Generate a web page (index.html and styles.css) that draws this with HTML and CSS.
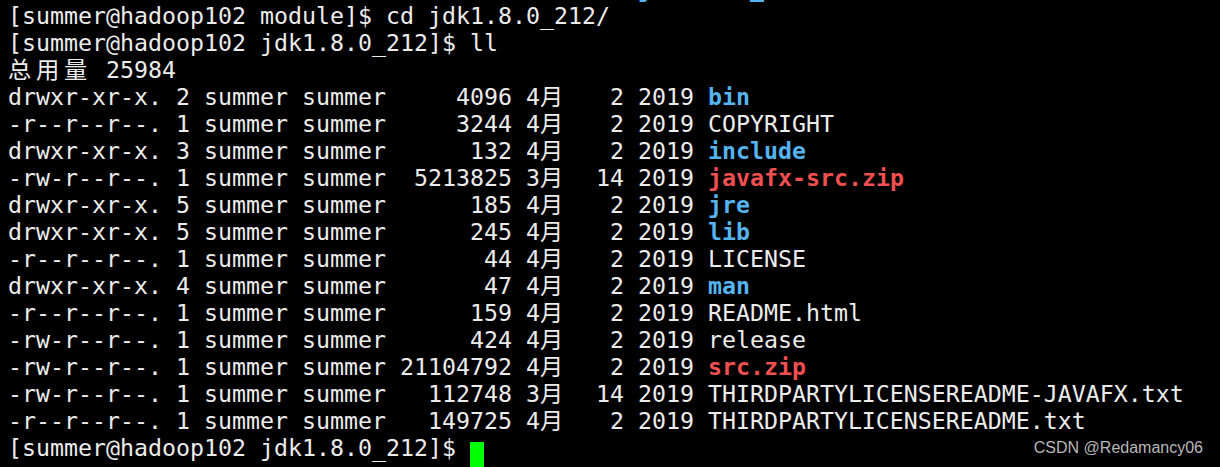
FILE: index.html
```html
<!DOCTYPE html>
<html lang="zh-CN">

<head>
    <meta charset="UTF-8">
    <meta name="viewport" content="width=device-width, initial-scale=1.0">
    <link rel="stylesheet" href="styles.css">
</head>

<body>
    <div id="screen">
<pre class="term">drwxr-xr-x. 7 summer summer 245 4<span class="wide">月</span>   2 2019 <b class="dir">jdk1.8.0_212</b>
[summer@hadoop102 module]$ cd jdk1.8.0_212/
[summer@hadoop102 jdk1.8.0_212]$ ll
<span class="wide">总用量</span> 25984
drwxr-xr-x. 2 summer summer     4096 4<span class="wide">月</span>   2 2019 <b class="dir">bin</b>
-r--r--r--. 1 summer summer     3244 4<span class="wide">月</span>   2 2019 COPYRIGHT
drwxr-xr-x. 3 summer summer      132 4<span class="wide">月</span>   2 2019 <b class="dir">include</b>
-rw-r--r--. 1 summer summer  5213825 3<span class="wide">月</span>  14 2019 <b class="zip">javafx-src.zip</b>
drwxr-xr-x. 5 summer summer      185 4<span class="wide">月</span>   2 2019 <b class="dir">jre</b>
drwxr-xr-x. 5 summer summer      245 4<span class="wide">月</span>   2 2019 <b class="dir">lib</b>
-r--r--r--. 1 summer summer       44 4<span class="wide">月</span>   2 2019 LICENSE
drwxr-xr-x. 4 summer summer       47 4<span class="wide">月</span>   2 2019 <b class="dir">man</b>
-r--r--r--. 1 summer summer      159 4<span class="wide">月</span>   2 2019 README.html
-rw-r--r--. 1 summer summer      424 4<span class="wide">月</span>   2 2019 release
-rw-r--r--. 1 summer summer 21104792 4<span class="wide">月</span>   2 2019 <b class="zip">src.zip</b>
-rw-r--r--. 1 summer summer   112748 3<span class="wide">月</span>  14 2019 THIRDPARTYLICENSEREADME-JAVAFX.txt
-r--r--r--. 1 summer summer   149725 4<span class="wide">月</span>   2 2019 THIRDPARTYLICENSEREADME.txt
[summer@hadoop102 jdk1.8.0_212]$ <span class="cursor"> </span></pre>
        <span class="watermark">CSDN @Redamancy06</span>
    </div>
</body>

</html>
```

FILE: styles.css
```css
html,
body {
    background: #000000;
    height: 100%;
    margin: 0;
    overflow: hidden;
    padding: 0;
}

#screen {
    height: 100%;
    overflow: hidden;
    position: relative;
}

.term {
    color: #ececec;
    font-family: "DejaVu Sans Mono", "Noto Sans CJK SC", monospace;
    font-size: 23.25px;
    line-height: 27px;
    margin: -25px 0 0 0;
    padding: 0 0 0 8px;
    white-space: pre;
}

.term b {
    font-weight: bold;
}

.term .dir {
    color: #55b4f0;
}

.term .zip {
    color: #f05050;
}

/* CJK glyphs take two terminal cells */
.wide {
    letter-spacing: calc(2ch - 1em);
}

.cursor {
    background: #00ff00;
    display: inline-block;
    height: 29px;
    vertical-align: -8px;
    width: 1ch;
}

.watermark {
    bottom: 10px;
    color: #b8b8b8;
    font-family: "Liberation Sans", Arial, sans-serif;
    font-size: 16px;
    position: absolute;
    right: 17px;
}
```
